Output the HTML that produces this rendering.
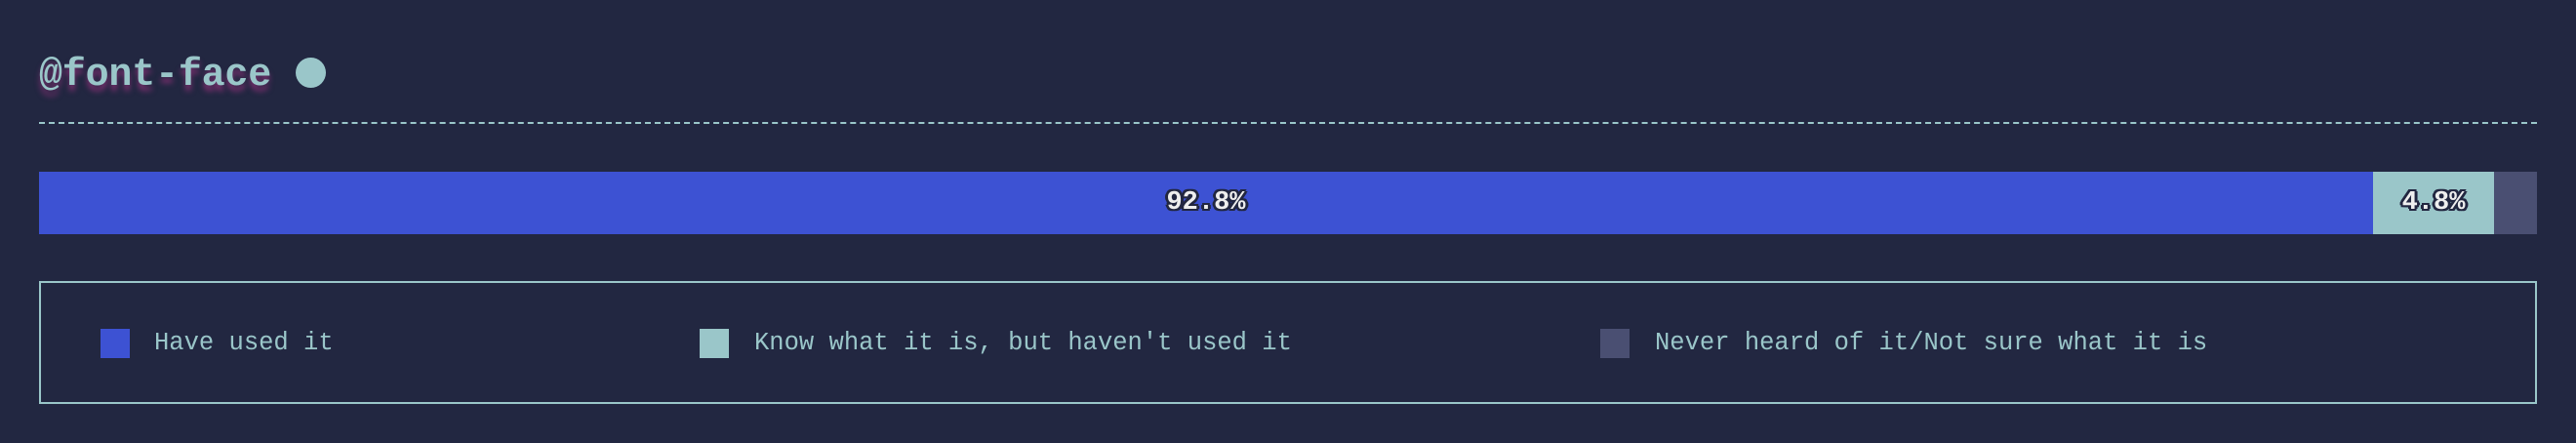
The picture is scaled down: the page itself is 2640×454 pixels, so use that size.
<!DOCTYPE html>
<html><head><style>
html,body{margin:0;padding:0;background:#222741;width:2640px;height:454px;overflow:hidden;font-family:"Liberation Mono",monospace;}
.t{position:absolute;left:40px;top:55px;font-size:40px;font-weight:bold;color:#9ac6c9;text-shadow:0 6px 6px #7a2f6e;letter-spacing:-0.2px;}
.dot{position:absolute;left:303px;top:59px;width:31px;height:31px;border-radius:50%;background:#9ac6c9;}
.dash{position:absolute;left:40px;top:125px;width:2560px;border-top:2px dashed #9ac6c9;}
.bar{position:absolute;top:176px;height:64px;display:flex;align-items:center;justify-content:center;font-family:"Liberation Mono",monospace;font-weight:bold;font-size:27px;color:#eee;text-shadow:2px 0 0 #222741,-2px 0 0 #222741,0 2px 0 #222741,0 -2px 0 #222741,2px 2px 0 #222741,-2px -2px 0 #222741,2px -2px 0 #222741,-2px 2px 0 #222741,3px 0 0 #222741,-3px 0 0 #222741;}
.box{position:absolute;left:40px;top:288px;width:2556px;height:122px;border:2px solid #9ac6c9;}
.sw{position:absolute;top:337px;width:30px;height:30px;}
.lt{position:absolute;top:336px;line-height:32px;font-size:25.5px;color:#9ac6c9;}
</style></head><body>
<div class="t">@font-face</div>
<div class="dot"></div>
<div class="dash"></div>
<div class="bar" style="left:40px;width:2392px;background:#3d52d3">92.8%</div>
<div class="bar" style="left:2432px;width:124px;background:#9ac6c9">4.8%</div>
<div class="bar" style="left:2556px;width:44px;background:#4a4f72"></div>
<div class="box"></div>
<div class="sw" style="left:103px;background:#3d52d3"></div><div class="lt" style="left:158px">Have used it</div>
<div class="sw" style="left:717px;background:#9ac6c9"></div><div class="lt" style="left:773px">Know what it is, but haven't used it</div>
<div class="sw" style="left:1640px;background:#4a4f72"></div><div class="lt" style="left:1696px">Never heard of it/Not sure what it is</div>
</body></html>
